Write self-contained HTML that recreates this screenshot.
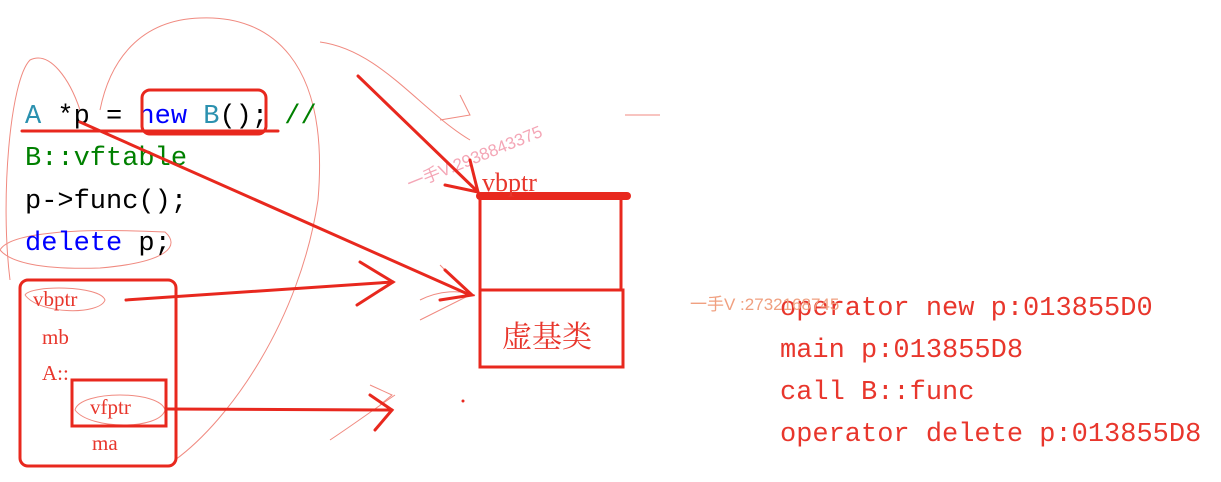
<!DOCTYPE html>
<html><head><meta charset="utf-8"><style>
html,body{margin:0;padding:0;background:#fff;width:1221px;height:482px;overflow:hidden}
svg{display:block}
.m{font-family:"Liberation Mono","Noto Serif CJK SC",monospace;font-size:27px}
.r{fill:#e8362c}
</style></head><body>
<svg width="1221" height="482" xmlns="http://www.w3.org/2000/svg">
<g fill="none" stroke="#f08a80" stroke-width="1">
<path d="M80,110 C70,80 50,50 30,60 C10,80 0,200 10,280"/>
<path d="M100,110 C110,60 140,20 200,18 C270,15 330,60 318,200 C300,320 230,420 175,460"/>
<path d="M320,42 C380,50 420,110 470,140"/>
<path d="M460,95 L470,115 L440,120"/>
<path d="M0,250 C10,232 80,228 165,232 C180,245 170,262 100,268 C40,270 10,262 0,250"/>
<path d="M25,295 C30,285 100,285 105,300 C100,315 40,315 25,295"/>
<path d="M75,410 C80,390 160,390 165,410 C160,430 90,430 75,410"/>
<path d="M625,115 L660,115"/>
<path d="M330,440 C360,420 380,405 395,395"/>
<path d="M370,385 L392,395 L380,405"/>
<path d="M420,300 C440,290 460,290 475,295"/>
<path d="M440,265 L470,295 L420,320"/>
</g>
<text class="m" x="25" y="123"><tspan fill="#2b91af">A</tspan><tspan fill="#000"> *p = </tspan><tspan fill="#0000ff">new</tspan><tspan fill="#2b91af"> B</tspan><tspan fill="#000">();</tspan><tspan fill="#008000"> //</tspan></text>
<text class="m" x="25" y="165" fill="#008000">B::vftable</text>
<text class="m" x="25" y="208" fill="#000">p-&gt;func();</text>
<text class="m" x="25" y="250"><tspan fill="#0000ff">delete</tspan><tspan fill="#000"> p;</tspan></text>
<g class="m r">
<text x="780" y="315">operator new p:013855D0</text>
<text x="780" y="357">main p:013855D8</text>
<text x="780" y="399">call B::func</text>
<text x="780" y="441">operator delete p:013855D8</text>
</g>
<text x="410" y="190" transform="rotate(-22 410 190)" font-family="Liberation Sans,Noto Sans CJK SC,sans-serif" font-size="17" fill="#f4a6b6">一手V:2938843375</text>
<text x="690" y="310" font-family="Liberation Sans,Noto Sans CJK SC,sans-serif" font-size="17" fill="#f0a080">一手V :2732168745</text>
<g fill="none" stroke="#e8281e" stroke-width="3" stroke-linecap="round">
<path d="M22,131 L278,131"/>
<rect x="142" y="90" width="124" height="44" rx="8"/>
<path d="M80,122 L470,295"/>
<path d="M445,270 L472,295 L440,300"/>
<path d="M358,76 L478,192"/>
<path d="M445,185 L478,192 L470,160"/>
<rect x="20" y="280" width="156" height="186" rx="8"/>
<rect x="72" y="380" width="94" height="46"/>
<path d="M126,300 L393,282"/>
<path d="M360,262 L393,282 L357,305"/>
<path d="M166,409 L392,410"/>
<path d="M370,395 L392,410 L375,430"/>
<path d="M480,200 L480,290 M621,200 L621,290"/>
<rect x="480" y="290" width="143" height="77"/>
<path d="M480,196 L627,196" stroke-width="8"/>
</g>
<g font-family="Liberation Serif,Noto Serif CJK SC,serif" class="r">
<text x="33" y="306" font-size="21">vbptr</text>
<text x="42" y="344" font-size="21">mb</text>
<text x="42" y="380" font-size="21">A::</text>
<text x="90" y="414" font-size="21">vfptr</text>
<text x="92" y="450" font-size="21">ma</text>
<text x="482" y="191" font-size="26">vbptr</text>
<text x="502" y="347" font-size="30" font-family="Noto Serif CJK SC,serif">虚基类</text>
</g>
<circle cx="463" cy="401" r="1.5" fill="#e8281e"/>
</svg>
</body></html>
